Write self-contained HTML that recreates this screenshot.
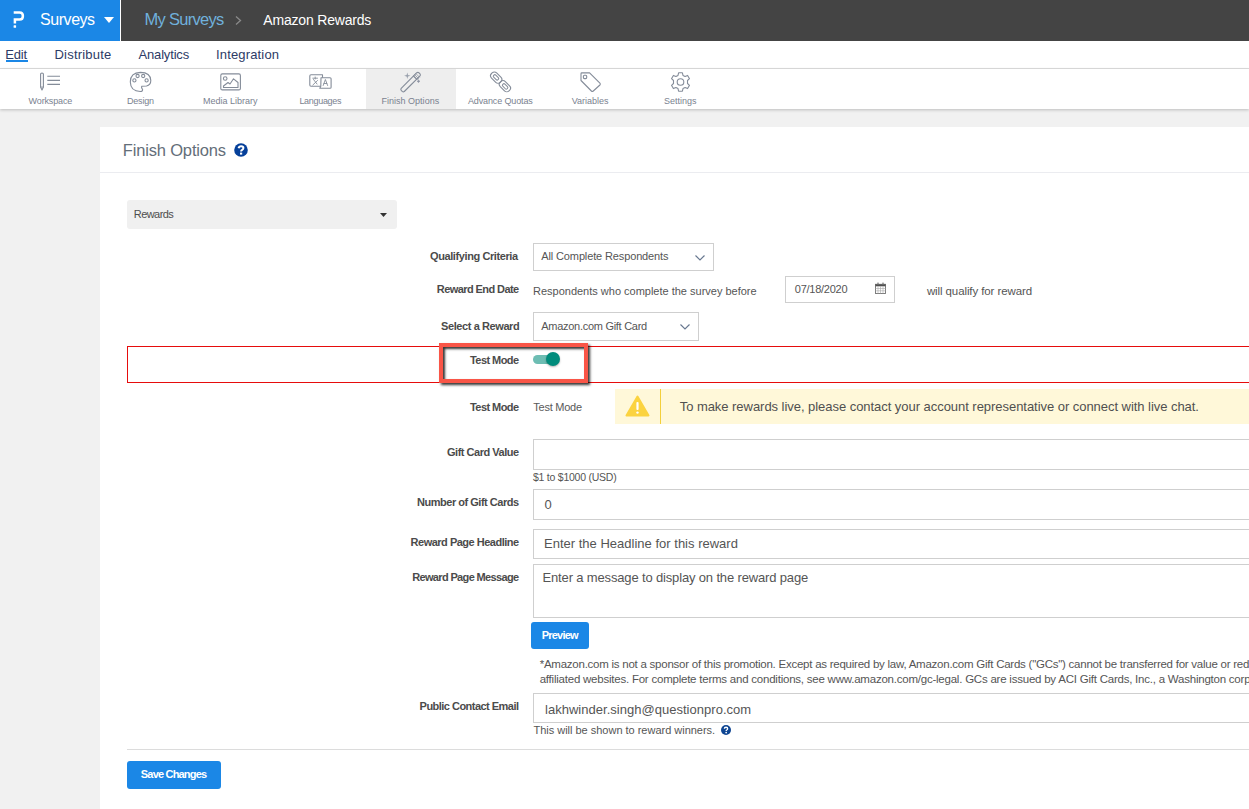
<!DOCTYPE html>
<html><head><meta charset="utf-8">
<style>
*{box-sizing:border-box;margin:0;padding:0}
html,body{width:1249px;height:809px;overflow:hidden}
body{background:#f1f1f1;font-family:"Liberation Sans",sans-serif;color:#545454;position:relative}
.a{position:absolute}
.t{position:absolute;white-space:nowrap;line-height:1}
svg{position:absolute;overflow:visible}

</style></head><body>
<div class="a" style="left:0;top:0;width:1249px;height:41px;background:#444"></div>
<div class="a" style="left:0;top:0;width:120px;height:41px;background:#1b87e6"></div>
<div class="a" style="left:120px;top:0;width:1px;height:41px;background:#fff"></div>
<!-- logo -->
<svg style="left:0;top:0" width="40" height="40" viewBox="0 0 40 40"><path d="M13.7 12.4 H19.6 Q22.9 12.4 22.9 16 Q22.9 19.6 19.6 19.6 H14.9 V23.6" fill="none" stroke="#fff" stroke-width="2.5"/><rect x="13.6" y="25.2" width="2.5" height="2.6" rx="0.5" fill="#fff"/></svg>
<svg style="left:104px;top:17px" width="10" height="6" viewBox="0 0 10 6"><path d="M0 0 L10 0 L5 6 Z" fill="#fff"/></svg>
<svg style="left:235px;top:16px" width="7" height="9" viewBox="0 0 7 9"><path d="M1 0.5 L5.5 4.5 L1 8.5" fill="none" stroke="#8a8a8a" stroke-width="1.3"/></svg>
<!-- nav -->
<div class="a" style="left:0;top:41px;width:1249px;height:28px;background:#fff;border-bottom:1px solid #dedede"></div>
<div class="a" style="left:6px;top:60px;width:22px;height:2px;background:#1b87e6"></div>
<!-- toolbar -->
<div class="a" style="left:0;top:69px;width:1249px;height:40px;background:#fff;box-shadow:0 1px 3px rgba(0,0,0,.22)"></div>
<div class="a" style="left:366px;top:69px;width:90px;height:40px;background:#eeeeee"></div>
<!-- toolbar icons -->
<svg style="left:0;top:0" width="1249" height="110" viewBox="0 0 1249 110">
<g fill="none" stroke="#848c99" stroke-width="1.1" stroke-linejoin="round" stroke-linecap="round">
<!-- workspace -->
<path d="M40.6 74 Q40.6 73 42 73 Q43.4 73 43.4 74 L43.4 87 L42 90 L40.6 87 Z"/>
<path d="M40.6 87 L43.4 87" stroke-width="0.8"/>
<path d="M47.3 76.3 H60 M47.3 80.4 H60 M47.3 84.4 H60" stroke-linecap="butt"/>
<!-- palette -->
<path d="M141.7 86.3 L146.5 86 Q150.8 85 150.8 80.5 Q150.5 72.5 140.5 72.4 Q130.4 72.6 130.3 82 Q130.6 91.4 140.3 91.5 Q142.8 91.4 142.6 89.6 Q141 87.5 141.7 86.3 Z"/>
<circle cx="137.6" cy="76" r="1.6"/><circle cx="143.2" cy="76" r="1.6"/><circle cx="134.4" cy="80.4" r="1.6"/><circle cx="146.6" cy="80.4" r="1.6"/>
<!-- media -->
<rect x="220.8" y="73.9" width="19.6" height="16" rx="1.5"/>
<circle cx="225.2" cy="78.5" r="1.8"/>
<path d="M223.5 87.5 V86 L228 82.5 L230 84 L233.5 78.8 L238 82.5 V87.5 Z"/>
<!-- languages -->
<path d="M311 74.8 H322.5 V86.2 H311 Q309.8 86.2 309.8 85 V76 Q309.8 74.8 311 74.8 Z"/>
<path d="M321 77.7 H330 Q331.1 77.7 331.1 78.8 V87.2 Q331.1 88.3 330 88.3 H319.8 L320.8 86.2 Z" fill="#fff"/>
<path d="M312.8 85 L317.5 80.5 M312.8 78.2 L317.5 78.2 M315.2 77 L315.2 79 M313.5 79.5 L317 84" stroke-width="0.9"/>
<path d="M323.2 85.5 L325.4 79.5 L327.6 85.5 M324 83.5 H326.8" stroke-width="0.9"/>
<!-- wand -->
<path d="M401.2 88.3 L416.8 72.7 Q417.9 71.9 419 72.8 L420 73.8 Q420.8 74.9 420 75.9 L404.3 91.5 Q403.3 92.2 402.2 91.4 L401.2 90.4 Q400.4 89.3 401.2 88.3 Z"/>
<path d="M413.5 76 L417 79.5" />
<path d="M414.5 74.5 L418.5 78.5 M415.8 73.5 L419.5 77.2" stroke-width="0.7"/>
<path d="M407.3 72.6 L408 75.1 L410.5 75.8 L408 76.5 L407.3 79 L406.6 76.5 L404.1 75.8 L406.6 75.1 Z" fill="#9aa1ad" stroke="none"/>
<path d="M418.5 79.9 L419 80.8 L419.9 81.3 L419 81.8 L418.5 82.7 L418 81.8 L417.1 81.3 L418 80.8 Z" fill="#8a91a0" stroke="#8a91a0" stroke-width="0.5"/>
<!-- chain -->
<g transform="translate(496.2 77.6) rotate(45)"><rect x="-6.2" y="-3.6" width="12.4" height="7.2" rx="3.2"/><rect x="-3.4" y="-1.5" width="6.2" height="3" rx="1.3" stroke-width="1"/></g>
<g transform="translate(504.9 86.2) rotate(45)"><rect x="-6.2" y="-3.6" width="12.4" height="7.2" rx="3.2"/><rect x="-2.8" y="-1.5" width="6.2" height="3" rx="1.3" stroke-width="1"/></g>
<!-- tag -->
<path d="M581.8 72.9 H589.6 L599.9 83.2 Q600.8 84.1 599.9 85 L593.3 91 Q592.3 91.8 591.4 91 L581 80.5 V73.7 Q581 72.9 581.8 72.9 Z"/>
<rect x="583.4" y="75.3" width="3.3" height="3.3" rx="1"/>
<!-- gear -->
<path d="M678.6 72.8 H682.4 L683 75.4 L685.1 76.5 L687.6 75.4 L689.5 78.7 L687.5 80.5 V83.5 L689.5 85.3 L687.6 88.6 L685.1 87.5 L683 88.6 L682.4 91.2 H678.6 L678 88.6 L675.9 87.5 L673.4 88.6 L671.5 85.3 L673.5 83.5 V80.5 L671.5 78.7 L673.4 75.4 L675.9 76.5 L678 75.4 Z"/>
<circle cx="680.5" cy="82" r="3.3"/>
</g>
</svg>

<!-- panel -->
<div class="a" style="left:100px;top:127px;width:1149px;height:682px;background:#fff"></div>
<div class="a" style="left:100px;top:172px;width:1149px;height:1px;background:#ebecf0"></div>
<!-- help icon heading -->
<svg style="left:234px;top:143px" width="14" height="14" viewBox="0 0 14 14"><circle cx="7" cy="7" r="6.8" fill="#06409a"/><path d="M4.6 5.2 Q5 3.3 7.1 3.3 Q9.4 3.3 9.4 5.1 Q9.4 6.3 8.2 6.9 Q7.1 7.5 7.1 8.6" fill="none" stroke="#fff" stroke-width="2"/><rect x="6" y="9.6" width="2.2" height="2" fill="#fff"/></svg>
<!-- rewards dropdown -->
<div class="a" style="left:127px;top:200px;width:270px;height:29px;background:#f0f0f0;border-radius:3px"></div>
<svg style="left:380px;top:213px" width="7" height="4" viewBox="0 0 7 4"><path d="M0 0 L7 0 L3.5 4 Z" fill="#333"/></svg>
<!-- qualifying select -->
<div class="a" style="left:533px;top:243px;width:181px;height:28px;background:#fff;border:1px solid #cfcfcf"></div>
<svg style="left:695px;top:255px" width="10" height="6" viewBox="0 0 10 6"><path d="M0.5 0.5 L5 5 L9.5 0.5" fill="none" stroke="#687890" stroke-width="1.15"/></svg>
<!-- date -->
<div class="a" style="left:785px;top:276px;width:110px;height:27px;background:#fff;border:1px solid #cfcfcf"></div>
<svg style="left:875px;top:282px" width="11" height="12" viewBox="0 0 11 12"><rect x="0.5" y="2.3" width="10" height="9.2" fill="none" stroke="#707070" stroke-width="0.9"/><rect x="0.5" y="2.3" width="10" height="2" fill="#505050"/><path d="M0.5 6.5 H10.5 M0.5 8.8 H10.5 M3 4.3 V11.5 M5.5 4.3 V11.5 M8 4.3 V11.5" stroke="#a8a8a8" stroke-width="0.6"/><rect x="2.4" y="0.6" width="1.2" height="2.4" fill="#707070"/><rect x="7.4" y="0.6" width="1.2" height="2.4" fill="#707070"/></svg>
<!-- select reward -->
<div class="a" style="left:533px;top:312px;width:166px;height:29px;background:#fff;border:1px solid #cfcfcf"></div>
<svg style="left:680px;top:324px" width="10" height="6" viewBox="0 0 10 6"><path d="M0.5 0.5 L5 5 L9.5 0.5" fill="none" stroke="#687890" stroke-width="1.15"/></svg>
<!-- red outline row -->
<div class="a" style="left:127px;top:346px;width:1140px;height:37px;border:1px solid #e60c0c"></div>
<!-- highlight box -->
<div class="a" style="left:439px;top:343px;width:149px;height:40px;border:4px solid #f95547;box-shadow:2px 2px 2.5px rgba(0,0,0,.8), inset 2px 2px 2.5px rgba(0,0,0,.8)"></div>
<!-- toggle -->
<div class="a" style="left:533px;top:355px;width:25px;height:9px;border-radius:5px;background:#6dbdb3"></div>
<div class="a" style="left:546px;top:352px;width:14px;height:14px;border-radius:50%;background:#008c7c;box-shadow:0 1px 2px rgba(0,0,0,.3)"></div>
<!-- warning -->
<div class="a" style="left:615px;top:389px;width:634px;height:35px;background:#fff8d9"></div>
<div class="a" style="left:660px;top:389px;width:1px;height:35px;background:#f3cf3a"></div>
<svg style="left:625px;top:395px" width="25" height="22" viewBox="0 0 25 22"><path d="M12.5 1.5 L23.5 20.5 L1.5 20.5 Z" fill="#fbd340" stroke="#fbd340" stroke-width="2" stroke-linejoin="round"/><rect x="11.4" y="7" width="2.2" height="8" rx="1" fill="#fff"/><circle cx="12.5" cy="17.6" r="1.2" fill="#fff"/></svg>
<!-- inputs -->
<div class="a" style="left:533px;top:439px;width:730px;height:31px;background:#fff;border:1px solid #cfcfcf"></div>
<div class="a" style="left:533px;top:489px;width:730px;height:31px;background:#fff;border:1px solid #cfcfcf"></div>
<div class="a" style="left:533px;top:529px;width:730px;height:30px;background:#fff;border:1px solid #cfcfcf"></div>
<div class="a" style="left:533px;top:564px;width:730px;height:54px;background:#fff;border:1px solid #cfcfcf"></div>
<div class="a" style="left:531px;top:622px;width:58px;height:27px;background:#1b87e6;border-radius:3px"></div>
<div class="a" style="left:533px;top:693px;width:730px;height:30px;background:#fff;border:1px solid #cfcfcf"></div>
<svg style="left:721px;top:725px" width="10" height="10" viewBox="0 0 14 14"><circle cx="7" cy="7" r="7" fill="#0e4592"/><path d="M4.7 5.3 Q4.7 3.2 7 3.2 Q9.3 3.2 9.3 5.2 Q9.3 6.4 8 7 Q7.2 7.4 7.2 8.4" fill="none" stroke="#fff" stroke-width="1.9"/><circle cx="7.2" cy="10.6" r="1.2" fill="#fff"/></svg>
<!-- footer -->
<div class="a" style="left:127px;top:749px;width:1122px;height:1px;background:#dcdcdc"></div>
<div class="a" style="left:127px;top:761px;width:94px;height:28px;background:#1b87e6;border-radius:3px"></div>

<div class="t" style="left:40.10px;top:12.46px;font-size:16px;color:#fff;letter-spacing:-0.466px;">Surveys</div>
<div class="t" style="left:144.60px;top:11.03px;font-size:16.5px;color:#70b1dc;letter-spacing:-0.715px;">My Surveys</div>
<div class="t" style="left:263.30px;top:13.15px;font-size:14px;color:#fff;letter-spacing:-0.191px;">Amazon Rewards</div>
<div class="t" style="left:5.20px;top:47.90px;font-size:13px;color:#2d3b66;letter-spacing:-0.163px;">Edit</div>
<div class="t" style="left:54.50px;top:47.90px;font-size:13px;color:#2d3b66;letter-spacing:0.203px;">Distribute</div>
<div class="t" style="left:138.50px;top:47.90px;font-size:13px;color:#2d3b66;letter-spacing:-0.165px;">Analytics</div>
<div class="t" style="left:216.00px;top:47.90px;font-size:13px;color:#2d3b66;letter-spacing:0.160px;">Integration</div>
<div class="t" style="left:28.60px;top:97.18px;font-size:9px;color:#7a8290;letter-spacing:-0.143px;">Workspace</div>
<div class="t" style="left:127.00px;top:97.18px;font-size:9px;color:#7a8290;letter-spacing:-0.202px;">Design</div>
<div class="t" style="left:203.00px;top:97.18px;font-size:9px;color:#7a8290;letter-spacing:-0.002px;">Media Library</div>
<div class="t" style="left:299.40px;top:97.18px;font-size:9px;color:#7a8290;letter-spacing:-0.305px;">Languages</div>
<div class="t" style="left:381.40px;top:97.18px;font-size:9px;color:#7a8290;letter-spacing:0.021px;">Finish Options</div>
<div class="t" style="left:468.00px;top:97.18px;font-size:9px;color:#7a8290;letter-spacing:-0.134px;">Advance Quotas</div>
<div class="t" style="left:571.80px;top:97.18px;font-size:9px;color:#7a8290;letter-spacing:-0.019px;">Variables</div>
<div class="t" style="left:664.00px;top:97.18px;font-size:9px;color:#7a8290;letter-spacing:-0.003px;">Settings</div>
<div class="t" style="left:122.80px;top:142.03px;font-size:16.5px;color:#646e79;letter-spacing:-0.170px;">Finish Options</div>
<div class="t" style="left:133.80px;top:208.69px;font-size:11px;color:#4e4e4e;letter-spacing:-0.567px;">Rewards</div>
<div class="t" style="left:430.00px;top:250.69px;font-size:11px;color:#4b4b4b;font-weight:bold;letter-spacing:-0.402px;">Qualifying Criteria</div>
<div class="t" style="left:541.30px;top:250.69px;font-size:11px;color:#555;letter-spacing:-0.132px;">All Complete Respondents</div>
<div class="t" style="left:436.80px;top:283.69px;font-size:11px;color:#4b4b4b;font-weight:bold;letter-spacing:-0.582px;">Reward End Date</div>
<div class="t" style="left:533.00px;top:285.69px;font-size:11px;color:#555;letter-spacing:-0.004px;">Respondents who complete the survey before</div>
<div class="t" style="left:794.80px;top:283.69px;font-size:11px;color:#555;letter-spacing:-0.260px;">07/18/2020</div>
<div class="t" style="left:926.90px;top:285.57px;font-size:11.5px;color:#555;letter-spacing:-0.099px;">will qualify for reward</div>
<div class="t" style="left:441.00px;top:320.69px;font-size:11px;color:#4b4b4b;font-weight:bold;letter-spacing:-0.404px;">Select a Reward</div>
<div class="t" style="left:541.30px;top:320.69px;font-size:11px;color:#555;letter-spacing:-0.286px;">Amazon.com Gift Card</div>
<div class="t" style="left:470.00px;top:355.09px;font-size:11px;color:#4b4b4b;font-weight:bold;letter-spacing:-0.557px;">Test Mode</div>
<div class="t" style="left:470.00px;top:402.39px;font-size:11px;color:#4b4b4b;font-weight:bold;letter-spacing:-0.557px;">Test Mode</div>
<div class="t" style="left:533.30px;top:402.39px;font-size:11px;color:#5a5a5a;letter-spacing:-0.241px;">Test Mode</div>
<div class="t" style="left:679.70px;top:399.90px;font-size:13px;color:#505050;letter-spacing:-0.043px;">To make rewards live, please contact your account representative or connect with live chat.</div>
<div class="t" style="left:447.00px;top:447.29px;font-size:11px;color:#4b4b4b;font-weight:bold;letter-spacing:-0.481px;">Gift Card Value</div>
<div class="t" style="left:533.00px;top:472.11px;font-size:10.5px;color:#555;letter-spacing:-0.241px;">$1 to $1000 (USD)</div>
<div class="t" style="left:417.00px;top:496.69px;font-size:11px;color:#4b4b4b;font-weight:bold;letter-spacing:-0.480px;">Number of Gift Cards</div>
<div class="t" style="left:544.60px;top:498.00px;font-size:13px;color:#555;">0</div>
<div class="t" style="left:410.60px;top:536.69px;font-size:11px;color:#4b4b4b;font-weight:bold;letter-spacing:-0.498px;">Reward Page Headline</div>
<div class="t" style="left:544.00px;top:536.50px;font-size:13px;color:#555;letter-spacing:0.008px;">Enter the Headline for this reward</div>
<div class="t" style="left:412.20px;top:571.69px;font-size:11px;color:#4b4b4b;font-weight:bold;letter-spacing:-0.650px;">Reward Page Message</div>
<div class="t" style="left:542.50px;top:571.20px;font-size:13px;color:#555;letter-spacing:-0.153px;">Enter a message to display on the reward page</div>
<div class="t" style="left:541.70px;top:629.69px;font-size:11px;color:#fff;font-weight:bold;letter-spacing:-0.788px;">Preview</div>
<div class="t" style="left:539.70px;top:659.07px;font-size:11.5px;color:#555;letter-spacing:-0.245px;">*Amazon.com is not a sponsor of this promotion. Except as required by law, Amazon.com Gift Cards ("GCs") cannot be transferred for value or redeemed for cash.</div>
<div class="t" style="left:539.70px;top:673.87px;font-size:11.5px;color:#555;letter-spacing:-0.226px;">affiliated websites. For complete terms and conditions, see www.amazon.com/gc-legal. GCs are issued by ACI Gift Cards, Inc., a Washington corporation.</div>
<div class="t" style="left:419.60px;top:700.69px;font-size:11px;color:#4b4b4b;font-weight:bold;letter-spacing:-0.524px;">Public Contact Email</div>
<div class="t" style="left:545.00px;top:702.50px;font-size:13px;color:#555;letter-spacing:0.023px;">lakhwinder.singh@questionpro.com</div>
<div class="t" style="left:533.50px;top:724.79px;font-size:11px;color:#555;letter-spacing:-0.015px;">This will be shown to reward winners.</div>
<div class="t" style="left:140.80px;top:768.89px;font-size:11px;color:#fff;font-weight:bold;letter-spacing:-0.808px;">Save Changes</div>
</body></html>
